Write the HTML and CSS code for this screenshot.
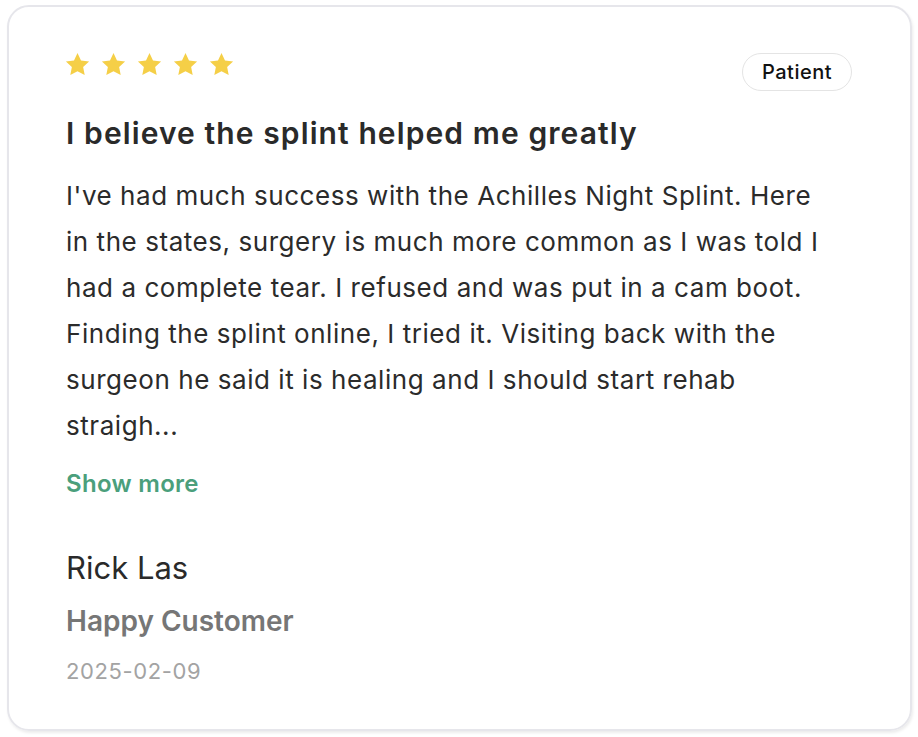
FILE: index.html
```html
<!DOCTYPE html>
<html lang="en">
<head>
<meta charset="utf-8">
<link rel="stylesheet" href="styles.css">
</head>
<body>
<div class="card">
  <div class="top">
    <div class="stars">
      <svg class="star" viewBox="0 0 24 24"><path d="M12 1.8l3.1 6.6 7.2.9-5.3 5 1.4 7.1L12 17.9l-6.4 3.5L7 14.3l-5.3-5 7.2-.9z"/></svg>
      <svg class="star" viewBox="0 0 24 24"><path d="M12 1.8l3.1 6.6 7.2.9-5.3 5 1.4 7.1L12 17.9l-6.4 3.5L7 14.3l-5.3-5 7.2-.9z"/></svg>
      <svg class="star" viewBox="0 0 24 24"><path d="M12 1.8l3.1 6.6 7.2.9-5.3 5 1.4 7.1L12 17.9l-6.4 3.5L7 14.3l-5.3-5 7.2-.9z"/></svg>
      <svg class="star" viewBox="0 0 24 24"><path d="M12 1.8l3.1 6.6 7.2.9-5.3 5 1.4 7.1L12 17.9l-6.4 3.5L7 14.3l-5.3-5 7.2-.9z"/></svg>
      <svg class="star" viewBox="0 0 24 24"><path d="M12 1.8l3.1 6.6 7.2.9-5.3 5 1.4 7.1L12 17.9l-6.4 3.5L7 14.3l-5.3-5 7.2-.9z"/></svg>
    </div>
    <span class="badge">Patient</span>
  </div>
  <h2 class="title">I believe the splint helped me greatly</h2>
  <p class="text">I've had much success with the Achilles Night Splint. Here<br>in the states, surgery is much more common as I was told I<br>had a complete tear. I refused and was put in a cam boot.<br>Finding the splint online, I tried it. Visiting back with the<br>surgeon he said it is healing and I should start rehab<br>straigh...</p>
  <a class="more" href="#">Show more</a>
  <div class="name">Rick Las</div>
  <div class="role">Happy Customer</div>
  <div class="date">2025-02-09</div>
</div>
</body>
</html>
```
FILE: styles.css
```css
* { box-sizing: border-box; }
html, body { margin: 0; background: #fff; }
body {
  padding: 5px 6px 6px 7px;
  font-family: Inter, "Open Sans", sans-serif;
  color: #2a2a2a;
}
.card {
  width: 905px;
  height: 726px;
  border: 2px solid #e6e6eb;
  border-radius: 22px;
  box-shadow: 1px 2px 3px rgba(0,0,0,0.08);
  padding: 44px 57px 0 57px;
  display: flex;
  flex-direction: column;
}
.top {
  display: flex;
  justify-content: space-between;
  align-items: flex-start;
}
.stars {
  display: flex;
  gap: 9px;
  margin-left: -2px;
}
.star { width: 27px; height: 27px; fill: #f5cf47; }
.badge {
  margin-top: 2px;
  height: 38px;
  width: 110px;
  border: 1px solid #e4e4e4;
  border-radius: 19px;
  display: flex;
  align-items: center;
  justify-content: center;
  font-size: 20px;
  font-weight: 500;
  letter-spacing: 0.5px;
  color: #111;
  margin-right: 1px;
}
.title {
  margin: 22px 0 0;
  font-size: 30px;
  font-weight: 560;
  letter-spacing: 1.1px;
  line-height: 40px;
  color: #2a2a2a;
}
.text {
  margin: 20px 0 0;
  font-size: 26px;
  line-height: 46px;
  font-weight: 400;
  letter-spacing: 0.55px;
  color: #2b2b2b;
  white-space: nowrap;
}
.more {
  margin-top: 20px;
  font-size: 24px;
  font-weight: 600;
  letter-spacing: 0.3px;
  color: #4b9f7c;
  text-decoration: none;
  line-height: 30px;
  align-self: flex-start;
}
.name {
  margin-top: 49px;
  font-size: 31px;
  font-weight: 400;
  line-height: 40px;
  color: #2a2a2a;
}
.role {
  margin-top: 15px;
  font-size: 28px;
  font-weight: 600;
  line-height: 36px;
  color: #767676;
}
.date {
  margin-top: 17px;
  font-size: 22px;
  letter-spacing: 0.6px;
  line-height: 30px;
  color: #a3a3a3;
}
```
